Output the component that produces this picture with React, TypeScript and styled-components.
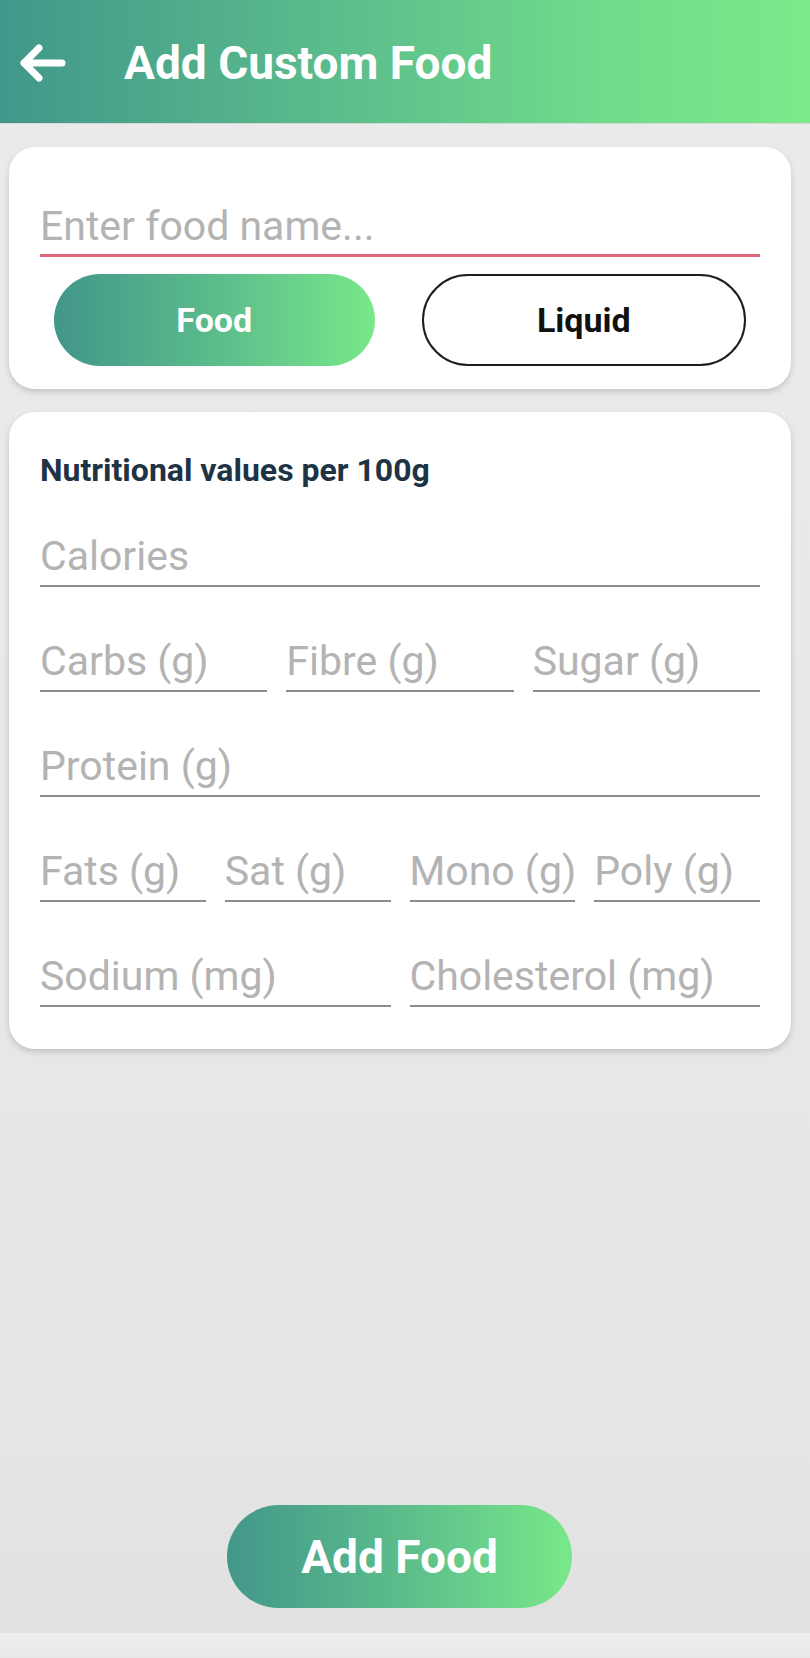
import styled, { createGlobalStyle } from "styled-components";

const GlobalStyle = createGlobalStyle`
    * {
        box-sizing: border-box;
    }
    body {
        margin: 0;
        background: #e8e8e8;
        font-family: Roboto, "Liberation Sans", sans-serif;
    }
`

const StyledPage = styled.div`
    width: 810px;
    height: 1658px;
    display: flex;
    flex-direction: column;
    background: linear-gradient(180deg, #ebebeb 0%, #e6e6e6 85%, #e1e1e1 98%);
`
const StyledHeader = styled.header`
    height: 123px;
    flex-shrink: 0;
    display: flex;
    align-items: center;
    padding: 2px 0 0 19px;
    background: linear-gradient(90deg, #41978a 0%, #5bbb8c 40%, #70dc8b 75%, #7aea8a 100%);
    box-shadow: 0 1px 0 rgba(0, 0, 0, 0.08);
`
const StyledBackButton = styled.button`
    width: 47px;
    height: 40px;
    padding: 0;
    border: none;
    background: none;
    display: flex;
    cursor: pointer;
`
const StyledTitle = styled.h1`
    margin: 0 0 0 58px;
    color: #fff;
    font-size: 46px;
    font-weight: 700;
`
const StyledContent = styled.main`
    flex: 1;
    display: flex;
    flex-direction: column;
    gap: 23px;
    padding: 24px 19px 0 9px;
`
const StyledCard = styled.section<{ $pad: string }>`
    background: #fff;
    border-radius: 26px;
    padding: ${(p) => p.$pad};
    box-shadow: 0 3px 6px rgba(0, 0, 0, 0.16);
`
const StyledNameInput = styled.input`
    display: block;
    width: 100%;
    height: 60px;
    padding: 0;
    border: none;
    border-bottom: 3px solid #e0677b;
    outline: none;
    background: transparent;
    font-family: inherit;
    font-size: 41px;
    color: #333;

    &::placeholder {
        color: #b3b3b3;
    }
`
const StyledToggleRow = styled.div`
    display: flex;
    gap: 47px;
    padding: 0 14px;
    margin-top: 17px;
`
const StyledToggle = styled.button<{ $active?: boolean }>`
    flex: 1;
    height: 92px;
    border-radius: 46px;
    font-family: inherit;
    font-size: 34px;
    font-weight: 700;
    cursor: pointer;
    border: ${(p) => (p.$active ? "none" : "2px solid #1e1e1e")};
    color: ${(p) => (p.$active ? "#fff" : "#111")};
    background: ${(p) =>
        p.$active ? "linear-gradient(90deg, #42968a 0%, #5ec08b 55%, #78e889 100%)" : "#fff"};
`
const StyledHeading = styled.h2`
    margin: 0 0 39px;
    font-size: 32px;
    line-height: 36px;
    font-weight: 700;
    color: #1e3344;
`
const StyledFields = styled.div`
    display: flex;
    flex-direction: column;
    gap: 45px;
`
const StyledFieldRow = styled.div<{ $cols: number }>`
    display: grid;
    grid-template-columns: repeat(${(p) => p.$cols}, 1fr);
    column-gap: 19px;
`
const StyledField = styled.input`
    display: block;
    width: 100%;
    min-width: 0;
    height: 60px;
    padding: 0;
    border: none;
    border-bottom: 2px solid #8c8c8c;
    outline: none;
    background: transparent;
    font-family: inherit;
    font-size: 41px;
    color: #333;

    &::placeholder {
        color: #b3b3b3;
    }
`
const StyledFooter = styled.div`
    display: flex;
    justify-content: center;
    padding: 0 11px 24px 0;
`
const StyledAddButton = styled.button`
    width: 345px;
    height: 103px;
    border: none;
    border-radius: 52px;
    font-family: inherit;
    font-size: 46px;
    font-weight: 700;
    color: #fff;
    cursor: pointer;
    background: linear-gradient(90deg, #43978a 0%, #5ec08b 55%, #79e889 100%);
`
const StyledNavBar = styled.div`
    height: 26px;
    flex-shrink: 0;
    background: linear-gradient(180deg, #efefef 0%, #e9e9e9 100%);
    border-top: 1px solid #e4e4e4;
`

const rows: string[][] = [
    ["Calories"],
    ["Carbs (g)", "Fibre (g)", "Sugar (g)"],
    ["Protein (g)"],
    ["Fats (g)", "Sat (g)", "Mono (g)", "Poly (g)"],
    ["Sodium (mg)", "Cholesterol (mg)"],
]

export default function App() {
    return (
        <StyledPage>
            <GlobalStyle />
            <StyledHeader>
                <StyledBackButton aria-label="Back">
                    <svg width="47" height="40" viewBox="0 0 47 40" fill="none">
                        <path
                            d="M5 20 H43 M20 5 L5 20 L20 35"
                            stroke="#fff"
                            strokeWidth="7"
                            strokeLinecap="round"
                            strokeLinejoin="round"
                        />
                    </svg>
                </StyledBackButton>
                <StyledTitle>Add Custom Food</StyledTitle>
            </StyledHeader>

            <StyledContent>
                <StyledCard $pad="50px 31px 23px 31px">
                    <StyledNameInput placeholder="Enter food name..." />
                    <StyledToggleRow>
                        <StyledToggle $active>Food</StyledToggle>
                        <StyledToggle>Liquid</StyledToggle>
                    </StyledToggleRow>
                </StyledCard>

                <StyledCard $pad="40px 31px 42px 31px">
                    <StyledHeading>Nutritional values per 100g</StyledHeading>
                    <StyledFields>
                        {rows.map((row) => (
                            <StyledFieldRow key={row[0]} $cols={row.length}>
                                {row.map((label) => (
                                    <StyledField key={label} placeholder={label} />
                                ))}
                            </StyledFieldRow>
                        ))}
                    </StyledFields>
                </StyledCard>
            </StyledContent>

            <StyledFooter>
                <StyledAddButton>Add Food</StyledAddButton>
            </StyledFooter>
            <StyledNavBar />
        </StyledPage>
    )
}
